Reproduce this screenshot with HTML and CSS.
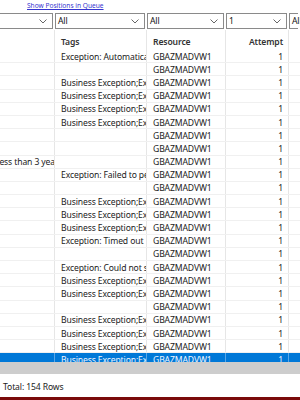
FILE: index.html
```html
<!DOCTYPE html>
<html>
<head>
<meta charset="utf-8">
<link rel="stylesheet" href="styles.css">
</head>
<body>
<div class="page">
  <div class="linkbar"><a href="#" class="link">Show Positions in Queue</a></div>
  <div class="filters">
    <div class="fcell"><div class="fbox"><span class="fval"></span><span class="chev"><svg width="8" height="5" viewBox="0 0 8 5"><path d="M0.5 0.5 L4 4 L7.5 0.5" fill="none" stroke="#555" stroke-width="0.9"/></svg></span></div></div>
    <div class="fcell"><div class="fbox"><span class="fval">All</span><span class="chev"><svg width="8" height="5" viewBox="0 0 8 5"><path d="M0.5 0.5 L4 4 L7.5 0.5" fill="none" stroke="#555" stroke-width="0.9"/></svg></span></div></div>
    <div class="fcell"><div class="fbox"><span class="fval">All</span><span class="chev"><svg width="8" height="5" viewBox="0 0 8 5"><path d="M0.5 0.5 L4 4 L7.5 0.5" fill="none" stroke="#555" stroke-width="0.9"/></svg></span></div></div>
    <div class="fcell"><div class="fbox"><span class="fval">1</span><span class="chev"><svg width="8" height="5" viewBox="0 0 8 5"><path d="M0.5 0.5 L4 4 L7.5 0.5" fill="none" stroke="#555" stroke-width="0.9"/></svg></span></div></div>
    <div class="fcell"><div class="fbox last"><span class="fval">All</span></div></div>
  </div>
  <div class="head row">
    <div class="c"></div>
    <div class="c">Tags</div>
    <div class="c">Resource</div>
    <div class="c num">Attempt</div>
    <div class="c"></div>
  </div>
  <div class="body">
    <div class="row"><div class="c"></div><div class="c">Exception: Automatically</div><div class="c">GBAZMADVW1</div><div class="c num">1</div><div class="c"></div></div>
    <div class="row"><div class="c"></div><div class="c"></div><div class="c">GBAZMADVW1</div><div class="c num">1</div><div class="c"></div></div>
    <div class="row"><div class="c"></div><div class="c">Business Exception;Ex</div><div class="c">GBAZMADVW1</div><div class="c num">1</div><div class="c"></div></div>
    <div class="row"><div class="c"></div><div class="c">Business Exception;Ex</div><div class="c">GBAZMADVW1</div><div class="c num">1</div><div class="c"></div></div>
    <div class="row"><div class="c"></div><div class="c">Business Exception;Ex</div><div class="c">GBAZMADVW1</div><div class="c num">1</div><div class="c"></div></div>
    <div class="row"><div class="c"></div><div class="c">Business Exception;Ex</div><div class="c">GBAZMADVW1</div><div class="c num">1</div><div class="c"></div></div>
    <div class="row"><div class="c"></div><div class="c"></div><div class="c">GBAZMADVW1</div><div class="c num">1</div><div class="c"></div></div>
    <div class="row"><div class="c"></div><div class="c"></div><div class="c">GBAZMADVW1</div><div class="c num">1</div><div class="c"></div></div>
    <div class="row"><div class="c cut">Less than 3 years</div><div class="c"></div><div class="c">GBAZMADVW1</div><div class="c num">1</div><div class="c"></div></div>
    <div class="row"><div class="c"></div><div class="c">Exception: Failed to perform</div><div class="c">GBAZMADVW1</div><div class="c num">1</div><div class="c"></div></div>
    <div class="row"><div class="c"></div><div class="c"></div><div class="c">GBAZMADVW1</div><div class="c num">1</div><div class="c"></div></div>
    <div class="row"><div class="c"></div><div class="c">Business Exception;Ex</div><div class="c">GBAZMADVW1</div><div class="c num">1</div><div class="c"></div></div>
    <div class="row"><div class="c"></div><div class="c">Business Exception;Ex</div><div class="c">GBAZMADVW1</div><div class="c num">1</div><div class="c"></div></div>
    <div class="row"><div class="c"></div><div class="c">Business Exception;Ex</div><div class="c">GBAZMADVW1</div><div class="c num">1</div><div class="c"></div></div>
    <div class="row"><div class="c"></div><div class="c">Exception: Timed out</div><div class="c">GBAZMADVW1</div><div class="c num">1</div><div class="c"></div></div>
    <div class="row"><div class="c"></div><div class="c"></div><div class="c">GBAZMADVW1</div><div class="c num">1</div><div class="c"></div></div>
    <div class="row"><div class="c"></div><div class="c">Exception: Could not start</div><div class="c">GBAZMADVW1</div><div class="c num">1</div><div class="c"></div></div>
    <div class="row"><div class="c"></div><div class="c">Business Exception;Ex</div><div class="c">GBAZMADVW1</div><div class="c num">1</div><div class="c"></div></div>
    <div class="row"><div class="c"></div><div class="c">Business Exception;Ex</div><div class="c">GBAZMADVW1</div><div class="c num">1</div><div class="c"></div></div>
    <div class="row"><div class="c"></div><div class="c"></div><div class="c">GBAZMADVW1</div><div class="c num">1</div><div class="c"></div></div>
    <div class="row"><div class="c"></div><div class="c">Business Exception;Ex</div><div class="c">GBAZMADVW1</div><div class="c num">1</div><div class="c"></div></div>
    <div class="row"><div class="c"></div><div class="c">Business Exception;Ex</div><div class="c">GBAZMADVW1</div><div class="c num">1</div><div class="c"></div></div>
    <div class="row"><div class="c"></div><div class="c">Business Exception;Ex</div><div class="c">GBAZMADVW1</div><div class="c num">1</div><div class="c"></div></div>
    <div class="row sel"><div class="c"></div><div class="c">Business Exception;Ex</div><div class="c">GBAZMADVW1</div><div class="c num">1</div><div class="c"></div></div>
  </div>
  <div class="hscroll"></div>
  <div class="footer">Total: 154 Rows</div>
  <div class="redbar"></div>
</div>
</body>
</html>
```
FILE: styles.css
```css
html, body {
  margin: 0;
  padding: 0;
  background: #ffffff;
}
.page {
  width: 300px;
  height: 400px;
  overflow: hidden;
  display: flex;
  flex-direction: column;
  font-family: "Noto Sans", "Open Sans", sans-serif;
  font-size: 8.6px;
  letter-spacing: -0.12px;
  color: #222222;
}
.linkbar {
  height: 13px;
  padding-left: 27px;
  display: flex;
  align-items: center;
}
.link {
  font-size: 6.6px;
  letter-spacing: 0;
  color: #3535d0;
  text-decoration: underline;
  line-height: 1;
}
.filters {
  display: grid;
  grid-template-columns: 55px 92px 79px 63px 11px;
  height: 17px;
}
.fcell {
  padding-right: 2px;
}
.fbox {
  height: 16px;
  box-sizing: border-box;
  border: 1px solid #8a8a8a;
  background: #fff;
  display: flex;
  align-items: center;
  justify-content: space-between;
  padding: 0 5px 0 2px;
  color: #111;
}
.filters .fcell:first-child .fbox {
  border-left: none;
}
.fbox.last {
  border-right: none;
  padding-right: 0;
}
.chev {
  display: flex;
  align-items: center;
}
.row {
  display: grid;
  grid-template-columns: 55px 92px 79px 63px 11px;
  height: 13.2px;
  box-sizing: border-box;
  border-bottom: 1px solid #f0f0f0;
}
.head {
  height: 20px;
  border-bottom: none;
  font-weight: 600;
  color: #333;
}
.head .c {
  padding-top: 4px;
}
.c {
  box-sizing: border-box;
  border-right: 1px solid #e6e6e6;
  padding-left: 6px;
  padding-top: 1px;
  white-space: nowrap;
  overflow: hidden;
  display: flex;
  align-items: center;
  line-height: 12px;
}
.c.num {
  justify-content: flex-end;
  padding-right: 5px;
}
.c.cut {
  padding-left: 0;
  text-indent: -5px;
}
.row .c:last-child {
  border-right: none;
}
.body {
  height: 312.3px;
  overflow: hidden;
}
.sel {
  background: #0078d7;
  color: #f0f6ff;
}
.sel .c {
  border-right-color: #5aa6e6;
}
.hscroll {
  height: 12px;
  background: #cdcdcd;
}
.footer {
  height: 22.4px;
  padding-left: 3px;
  display: flex;
  align-items: center;
  padding-top: 4px;
  box-sizing: border-box;
  color: #222;
}
.redbar {
  flex: 1;
  background: #7a0a0a;
}
```
